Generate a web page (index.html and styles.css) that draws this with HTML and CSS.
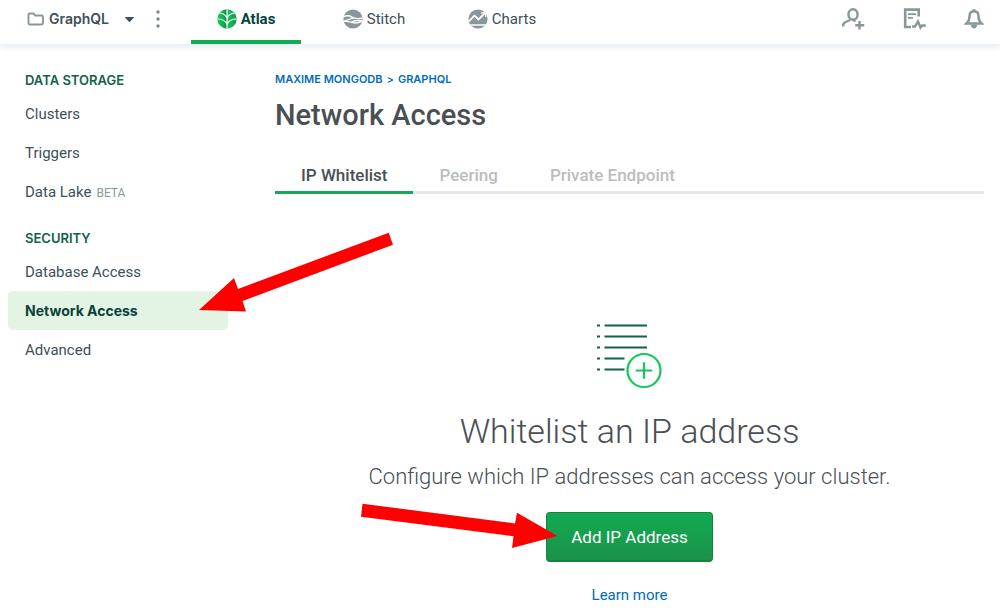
FILE: index.html
```html
<!DOCTYPE html>
<html lang="en">
<head>
<meta charset="utf-8">
<title>Network Access</title>
<link rel="stylesheet" href="styles.css">
</head>
<body>
<header class="topbar">
  <div class="project">
    <button class="project-picker" type="button">
      <svg width="18" height="14" viewBox="0 0 18 14" fill="none" stroke="#89979b" stroke-width="1.9"><path d="M2.500 1.500h4l1.800 2h6.200q1.500 0 1.500 1.500v6q0 1.500-1.500 1.500h-11.500q-1.500 0-1.500-1.500v-8.500q0-1 1-1z"/></svg>
      <span class="project-name">GraphQL</span>
      <svg class="caret" width="9" height="5" viewBox="0 0 9 5"><path d="M.5 0h8q.7.2.2.800L5 4.700q-.5.400-1 0L.3.800Q-.2.200.5 0z" fill="#3d4f58"/></svg>
    </button>
    <button class="more" type="button" aria-label="Project options">
      <svg width="4" height="18" viewBox="0 0 4 18" fill="#7b8a8e"><circle cx="2" cy="2" r="1.700"/><circle cx="2" cy="9" r="1.700"/><circle cx="2" cy="16" r="1.700"/></svg>
    </button>
  </div>
  <nav class="products">
    <a class="product product-current" href="#atlas">
      <svg width="20" height="20" viewBox="0 0 20 20"><defs><clipPath id="leaf"><circle cx="10" cy="10" r="9.700"/></clipPath><linearGradient id="half"><stop offset="0" stop-color="#13c956"/><stop offset=".3" stop-color="#10b552"/><stop offset=".5" stop-color="#0a7c48"/><stop offset=".52" stop-color="#13c956"/><stop offset="1" stop-color="#0c9a4a"/></linearGradient></defs><g clip-path="url(#leaf)"><path d="M0 0h20v20H0z" fill="url(#half)"/><g fill="none" stroke="#fff" stroke-width="1.200"><path d="M10 0v20M2 4q6.500.500 8 5.500q1.500-5 8-5.500M0 10q8 0 10 5.500q2-5.500 10-5.500"/></g></g></svg>
      <span>Atlas</span>
    </a>
    <a class="product" href="#stitch">
      <svg width="20" height="20" viewBox="0 0 20 20"><defs><clipPath id="disc"><circle cx="10" cy="10" r="9.600"/></clipPath></defs><circle cx="10" cy="10" r="9.600" fill="#89979b"/><g clip-path="url(#disc)" fill="none" stroke="#fff" stroke-width="1.300"><path d="M0 8q5-2.500 9 0t11 1M0 12.500q4-1 7-2.500q2-1 4-1M0 12.500q5-.5 9 1t11-1.500M8 13.200q3-1.700 6-1.700t6 .5"/></g></svg>
      <span>Stitch</span>
    </a>
    <a class="product" href="#charts">
      <svg width="20" height="20" viewBox="0 0 20 20"><defs><clipPath id="disc2"><circle cx="10" cy="10" r="9.600"/></clipPath></defs><circle cx="10" cy="10" r="9.600" fill="#89979b"/><g clip-path="url(#disc2)" fill="none" stroke="#fff"><path d="M0 13l6.500-6.500 4 4L17 4" stroke-width="1.800"/><path d="M13 3.800h4.700V8" stroke-width="1.200"/><path d="M0 16h20" stroke-width="1.400"/></g></svg>
      <span>Charts</span>
    </a>
  </nav>
  <div class="tools">
    <button type="button" aria-label="Invite user"><svg width="23" height="22" viewBox="0 0 23 22" fill="none" stroke="#89979b" stroke-width="2.400"><ellipse cx="11" cy="6.500" rx="4.600" ry="5.200"/><path d="M1.200 18.500v-1q0-2.500 2.500-3.500l4.500-2M11.500 12.500l2 .7M17.500 13v8.500M13.200 17.200h9"/></svg></button>
    <button type="button" aria-label="Activity feed"><svg width="23" height="22" viewBox="0 0 23 22" fill="none" stroke="#89979b" stroke-width="2.600"><path d="M8 19H2.200V1.600h13.500v7"/><path d="M5 6.200h8M5 9.800h5" stroke-width="1.800"/><path d="M9 18.500h3l3-5 2.500 6 1.500-2h3.800" stroke-width="2.400"/></svg></button>
    <button type="button" aria-label="Alerts"><svg width="20" height="22" viewBox="0 0 20 22"><path d="M10 3.200c-3 0-4.500 2-4.500 5 0 4-.8 5.500-3 7.300h15c-2.200-1.800-3-3.300-3-7.300 0-3-1.500-5-4.500-5z" fill="none" stroke="#89979b" stroke-width="2.500"/><path d="M8.500 1.200h3v2h-3zM6.500 16.500h7q-1 4-3.500 4t-3.500-4z" fill="#89979b"/></svg></button>
  </div>
</header>
<div class="layout">
  <aside class="sidebar">
    <nav class="group">
      <h2 class="group-title">DATA STORAGE</h2>
      <a class="item" href="#clusters">Clusters</a>
      <a class="item" href="#triggers">Triggers</a>
      <a class="item" href="#lake">Data Lake <span class="beta">BETA</span></a>
    </nav>
    <nav class="group">
      <h2 class="group-title">SECURITY</h2>
      <a class="item" href="#db">Database Access</a>
      <a class="item item-current" href="#network">Network Access
        <svg class="arrow arrow-nav" width="196" height="80" viewBox="0 0 196 80"><path d="M1 78L36 46 40 57 190.700.7 195 12.700 44.500 69 48 79.500z" fill="#f00"/></svg>
      </a>
      <a class="item" href="#advanced">Advanced</a>
    </nav>
  </aside>
  <main class="main">
    <div class="crumbs"><a href="#org">MAXIME MONGODB</a><span>&gt;</span><a href="#project">GRAPHQL</a></div>
    <h1 class="title">Network Access</h1>
    <nav class="tabs">
      <a class="tab tab-current" href="#whitelist">IP Whitelist</a>
      <a class="tab" href="#peering">Peering</a>
      <a class="tab" href="#endpoint">Private Endpoint</a>
    </nav>
    <section class="empty">
      <svg width="68" height="66" viewBox="0 0 68 66" fill="none"><g stroke="#116149" stroke-width="2.200"><path d="M1 2.500h3M1 13.500h3M1 24.500h3M1 35.500h3M1 46.500h3M8.500 2.500H51M8.500 13.500H51M8.500 24.500H51M8.500 35.500H28.500M8.500 46.500H28.500"/></g><g stroke="#13c95b" stroke-width="2.200"><circle cx="48" cy="47.500" r="16.500"/><path d="M48 39.200v16.600M39.700 47.500h16.600"/></g></svg>
      <h2 class="empty-title">Whitelist an IP address</h2>
      <p class="empty-text">Configure which IP addresses can access your cluster.</p>
      <div class="action">
        <button class="add" type="button">Add IP Address</button>
        <svg class="arrow arrow-add" width="199" height="46" viewBox="0 0 199 46"><path d="M2.500.7L155 20.500 157 9.700 197.500 33 152 45 153.500 33.300 1 13.700z" fill="#f00"/></svg>
      </div>
      <a class="learn" href="#learn">Learn more</a>
    </section>
  </main>
</div>
</body>
</html>
```
FILE: styles.css
```css
* { box-sizing: border-box; }
body { margin: 0; background: #fff; color: #3d4f58; font-family: Roboto, "Liberation Sans", sans-serif; font-size: 15px; line-height: 20px; }
a { color: inherit; text-decoration: none; }
h1, h2, p { margin: 0; }
button { border: 0; padding: 0; background: none; font: inherit; color: inherit; cursor: pointer; }
svg { display: block; flex: none; }
.topbar { display: flex; height: 44px; background: #fff; box-shadow: 0 2px 8px #dfe7ee; }
.project { display: flex; align-items: center; width: 191px; padding: 0 0 6px 27px; }
.project-picker { display: flex; align-items: center; gap: 4px; font-family: Inter, sans-serif; font-size: 14px; font-weight: 600; }
.caret { margin-left: 12px; }
.more { margin-left: 22px; }
.products { display: flex; gap: 18px; }
.product { display: flex; align-items: center; justify-content: center; gap: 4px; width: 110px; padding-bottom: 6px; }
.product-current { padding: 4px 0 6px; border-bottom: 4px solid #13aa52; border-radius: 3px 3px 0 0; color: #09423b; font-weight: 700; }
.tools { display: flex; align-items: center; gap: 38px; margin-left: auto; padding: 0 16px 6px 0; }
.layout { display: flex; }
.sidebar { display: flex; flex-direction: column; gap: 13px; flex: 0 0 236px; padding: 22px 8px 0; }
.group-title { padding-left: 17px; color: #116149; font-family: Inter, sans-serif; font-size: 13px; font-weight: 600; line-height: 28px; }
.item { display: flex; align-items: center; height: 39px; padding-left: 17px; border-radius: 5px; }
.item-current { position: relative; background: #e4f4e4; color: #09423b; font-family: Inter, sans-serif; font-size: 14px; font-weight: 700; }
.beta { margin: 3px 0 0 5px; color: #89979b; font-size: 12px; }
.arrow { position: absolute; z-index: 1; pointer-events: none; }
.arrow-nav { left: 190px; top: -59px; }
.main { flex: 1; padding: 25px 16px 0 39px; }
.crumbs { display: flex; gap: 4px; color: #006cbc; font-family: Inter, sans-serif; font-size: 11px; font-weight: 600; }
.title { margin-top: 8px; color: #494f54; font-size: 29px; font-weight: 500; line-height: 36px; }
.tabs { display: flex; margin-top: 24px; box-shadow: inset 0 -3px #e8e8e8; }
.tab { padding: 8px 26px 6px; border-bottom: 3px solid transparent; color: #babdbe; font-size: 17px; font-weight: 500; }
.tab-current { border-color: #13aa52; color: #494f54; }
.empty { display: flex; flex-direction: column; align-items: center; padding-top: 129px; color: #494f54; }
.empty-title { margin-top: 20px; font-size: 34px; font-weight: 300; line-height: 44px; }
.empty-text { margin-top: 10px; font-size: 22px; font-weight: 300; line-height: 28px; }
.action { position: relative; margin-top: 21px; }
.add { height: 50px; padding: 0 24px; border: 1px solid #158242; border-bottom-width: 2px; border-radius: 4px; background: linear-gradient(#13aa52, #1a9349); color: #fff; font-size: 17px; }
.arrow-add { left: -186px; top: -9px; }
.learn { margin-top: 23px; color: #006cbc; }
```
